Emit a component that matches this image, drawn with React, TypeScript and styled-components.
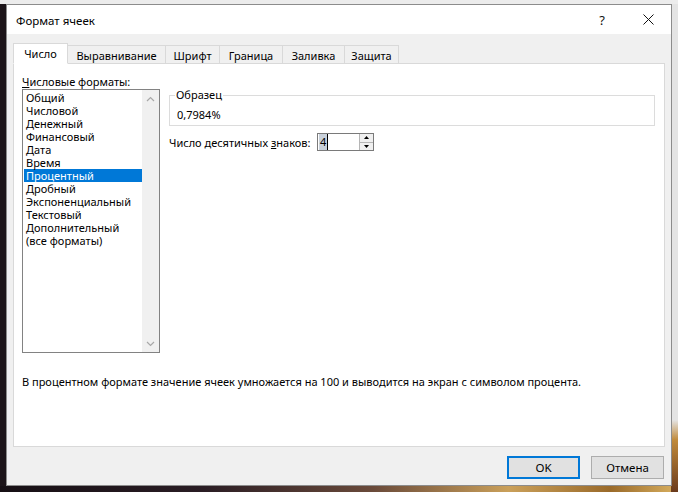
import React from "react";
import styled, { createGlobalStyle } from "styled-components";

const GlobalStyle = createGlobalStyle`
  html, body {
    margin: 0;
    padding: 0;
    background: #1c1419;
  }
  body {
    font-family: "Segoe UI", "Noto Sans", "DejaVu Sans", sans-serif;
    font-size: 11px;
    color: #000;
  }
`;

const Page = styled.div`
  width: 678px;
  height: 492px;
  box-sizing: border-box;
  padding: 4px 6px 0 6px;
  overflow: hidden;
  background:
    linear-gradient(#ececec, #ececec) top left / 100% 4px no-repeat,
    linear-gradient(#e4e4e4 0 420px, #c08a3a 440px, #6a3a1c 492px) top right / 7px 100% no-repeat,
    linear-gradient(to right, #160f14 0, #2a1d24 30%, #6a4a3a 55%, #caa05a 75%, #9a6a2a 90%, #d9b060 100%) bottom left / 100% 6px no-repeat,
    #1c1419;
`;

const Dialog = styled.div`
  width: 666px;
  height: 482px;
  box-sizing: border-box;
  border: 1px solid #8c8c8c;
  background: #f0f0f0;
  display: flex;
  flex-direction: column;
`;

const TitleBar = styled.div`
  height: 29px;
  flex-shrink: 0;
  background: #fff;
  display: flex;
  align-items: center;
  padding-left: 9px;
`;

const Title = styled.div`
  flex: 1;
  font-size: 11.5px;
  padding-top: 2px;
`;

const TitleButton = styled.div<{ $w: number }>`
  width: ${(p) => p.$w}px;
  height: 29px;
  display: flex;
  align-items: center;
  justify-content: center;
  font-size: 13px;
  color: #111;
`;

const Body = styled.div`
  flex: 1;
  display: flex;
  flex-direction: column;
  padding: 8px 6px 0 6px;
`;

const Tabs = styled.div`
  display: flex;
  align-items: flex-end;
  height: 21px;
  position: relative;
  z-index: 1;
`;

const Tab = styled.div<{ $w: number; $active?: boolean }>`
  width: ${(p) => p.$w}px;
  box-sizing: border-box;
  height: ${(p) => (p.$active ? 21 : 19)}px;
  display: flex;
  align-items: center;
  justify-content: center;
  border: 1px solid #d9d9d9;
  border-bottom: ${(p) => (p.$active ? "1px solid #fff" : "1px solid #d9d9d9")};
  border-left-width: ${(p) => (p.$active ? 1 : 0)}px;
  background: ${(p) => (p.$active ? "#fff" : "#f0f0f0")};
  margin-bottom: -1px;
  padding-top: ${(p) => (p.$active ? 0 : 1)}px;
`;

const Panel = styled.div`
  height: 384px;
  box-sizing: border-box;
  background: #fff;
  border: 1px solid #d9d9d9;
  display: flex;
  flex-direction: column;
  padding: 10px 9px 0 8px;
`;

const Top = styled.div`
  display: flex;
  gap: 9px;
`;

const LeftCol = styled.div`
  display: flex;
  flex-direction: column;
  width: 138px;
`;

const FieldLabel = styled.div`
  height: 15px;
  line-height: 15px;
  white-space: nowrap;
`;

const ListBox = styled.div`
  width: 138px;
  height: 264px;
  box-sizing: border-box;
  border: 1px solid #828282;
  display: flex;
  background: #fff;
`;

const Items = styled.div`
  flex: 1;
  padding: 1px 0 0 1px;
  overflow: hidden;
`;

const Item = styled.div<{ $selected?: boolean }>`
  height: 13px;
  line-height: 13px;
  padding-left: 2px;
  white-space: nowrap;
  background: ${(p) => (p.$selected ? "#0078d7" : "transparent")};
  color: ${(p) => (p.$selected ? "#fff" : "#000")};
`;

const ScrollBar = styled.div`
  width: 17px;
  background: #f0f0f0;
  display: flex;
  flex-direction: column;
  justify-content: space-between;
  align-items: center;
  padding: 6px 0 5px;
`;

const RightCol = styled.div`
  flex: 1;
  display: flex;
  flex-direction: column;
  padding-top: 14px;
`;

const Sample = styled.fieldset`
  margin: 0;
  border: 1px solid #dcdcdc;
  padding: 0 8px 0 5px;
  height: 38px;
  box-sizing: border-box;
  width: 486px;
`;

const Legend = styled.legend`
  padding: 0 1px;
  line-height: 14px;
`;

const SampleValue = styled.div`
  padding: 5px 0 0 2px;
`;

const DecimalsRow = styled.div`
  display: flex;
  align-items: center;
  margin-top: 7px;
`;

const DecimalsLabel = styled.div`
  width: 148px;
  white-space: nowrap;
`;

const Spin = styled.div`
  display: flex;
  height: 18px;
  box-sizing: border-box;
  border: 1px solid #7a7a7a;
  width: 57px;
`;

const SpinInput = styled.div`
  flex: 1;
  display: flex;
  align-items: center;
  padding-left: 1px;
`;

const Selected = styled.span`
  background: #c9d1db;
  height: 16px;
  line-height: 16px;
  padding: 0 1px;
  border-right: 1px solid #000;
`;

const SpinButtons = styled.div`
  width: 13px;
  display: flex;
  flex-direction: column;
  border-left: 1px solid #b5b5b5;
`;

const SpinButton = styled.div`
  flex: 1;
  display: flex;
  align-items: center;
  justify-content: center;
  background: #f0f0f0;
  & + & {
    border-top: 1px solid #b5b5b5;
  }
`;

const Description = styled.div`
  margin-top: 21px;
  white-space: nowrap;
`;

const Footer = styled.div`
  display: flex;
  justify-content: flex-end;
  gap: 11px;
  padding-top: 9px;
  padding-right: 1px;
`;

const Button = styled.div<{ $default?: boolean }>`
  width: 73px;
  height: 23px;
  box-sizing: border-box;
  display: flex;
  align-items: center;
  justify-content: center;
  background: #e1e1e1;
  font-size: 11.5px;
  border: ${(p) => (p.$default ? "2px solid #0078d7" : "1px solid #adadad")};
`;

const Chevron = ({ up }: { up?: boolean }) => (
  <svg width="9" height="6" viewBox="0 0 9 6">
    <path
      d={up ? "M1 5 L4.5 1.5 L8 5" : "M1 1 L4.5 4.5 L8 1"}
      fill="none"
      stroke="#a8a8a8"
      strokeWidth="1.2"
    />
  </svg>
);

const Arrow = ({ up }: { up?: boolean }) => (
  <svg width="5" height="3" viewBox="0 0 5 3">
    <path d={up ? "M0 3 L2.5 0 L5 3 Z" : "M0 0 L2.5 3 L5 0 Z"} fill="#000" />
  </svg>
);

const tabs = [
  { label: "Число", w: 55 },
  { label: "Выравнивание", w: 98 },
  { label: "Шрифт", w: 54 },
  { label: "Граница", w: 63 },
  { label: "Заливка", w: 62 },
  { label: "Защита", w: 54 },
];

const formats = [
  "Общий",
  "Числовой",
  "Денежный",
  "Финансовый",
  "Дата",
  "Время",
  "Процентный",
  "Дробный",
  "Экспоненциальный",
  "Текстовый",
  "Дополнительный",
  "(все форматы)",
];

export default function App() {
  return (
    <>
      <GlobalStyle />
      <Page>
        <Dialog>
          <TitleBar>
            <Title>Формат ячеек</Title>
            <TitleButton $w={46}>?</TitleButton>
            <TitleButton $w={46}>
              <svg width="11" height="11" viewBox="0 0 11 11">
                <path d="M0.5 0.5 L10.5 10.5 M10.5 0.5 L0.5 10.5" stroke="#111" strokeWidth="1" />
              </svg>
            </TitleButton>
          </TitleBar>
          <Body>
            <Tabs>
              {tabs.map((t, i) => (
                <Tab key={t.label} $w={t.w} $active={i === 0}>
                  {t.label}
                </Tab>
              ))}
            </Tabs>
            <Panel>
              <Top>
                <LeftCol>
                  <FieldLabel>
                    <u>Ч</u>исловые форматы:
                  </FieldLabel>
                  <ListBox>
                    <Items>
                      {formats.map((f) => (
                        <Item key={f} $selected={f === "Процентный"}>
                          {f}
                        </Item>
                      ))}
                    </Items>
                    <ScrollBar>
                      <Chevron up />
                      <Chevron />
                    </ScrollBar>
                  </ListBox>
                </LeftCol>
                <RightCol>
                  <Sample>
                    <Legend>Образец</Legend>
                    <SampleValue>0,7984%</SampleValue>
                  </Sample>
                  <DecimalsRow>
                    <DecimalsLabel>
                      Число десятичных <u>з</u>наков:
                    </DecimalsLabel>
                    <Spin>
                      <SpinInput>
                        <Selected>4</Selected>
                      </SpinInput>
                      <SpinButtons>
                        <SpinButton>
                          <Arrow up />
                        </SpinButton>
                        <SpinButton>
                          <Arrow />
                        </SpinButton>
                      </SpinButtons>
                    </Spin>
                  </DecimalsRow>
                </RightCol>
              </Top>
              <Description>
                В процентном формате значение ячеек умножается на 100 и выводится на экран с символом процента.
              </Description>
            </Panel>
            <Footer>
              <Button $default>OK</Button>
              <Button>Отмена</Button>
            </Footer>
          </Body>
        </Dialog>
      </Page>
    </>
  );
}
